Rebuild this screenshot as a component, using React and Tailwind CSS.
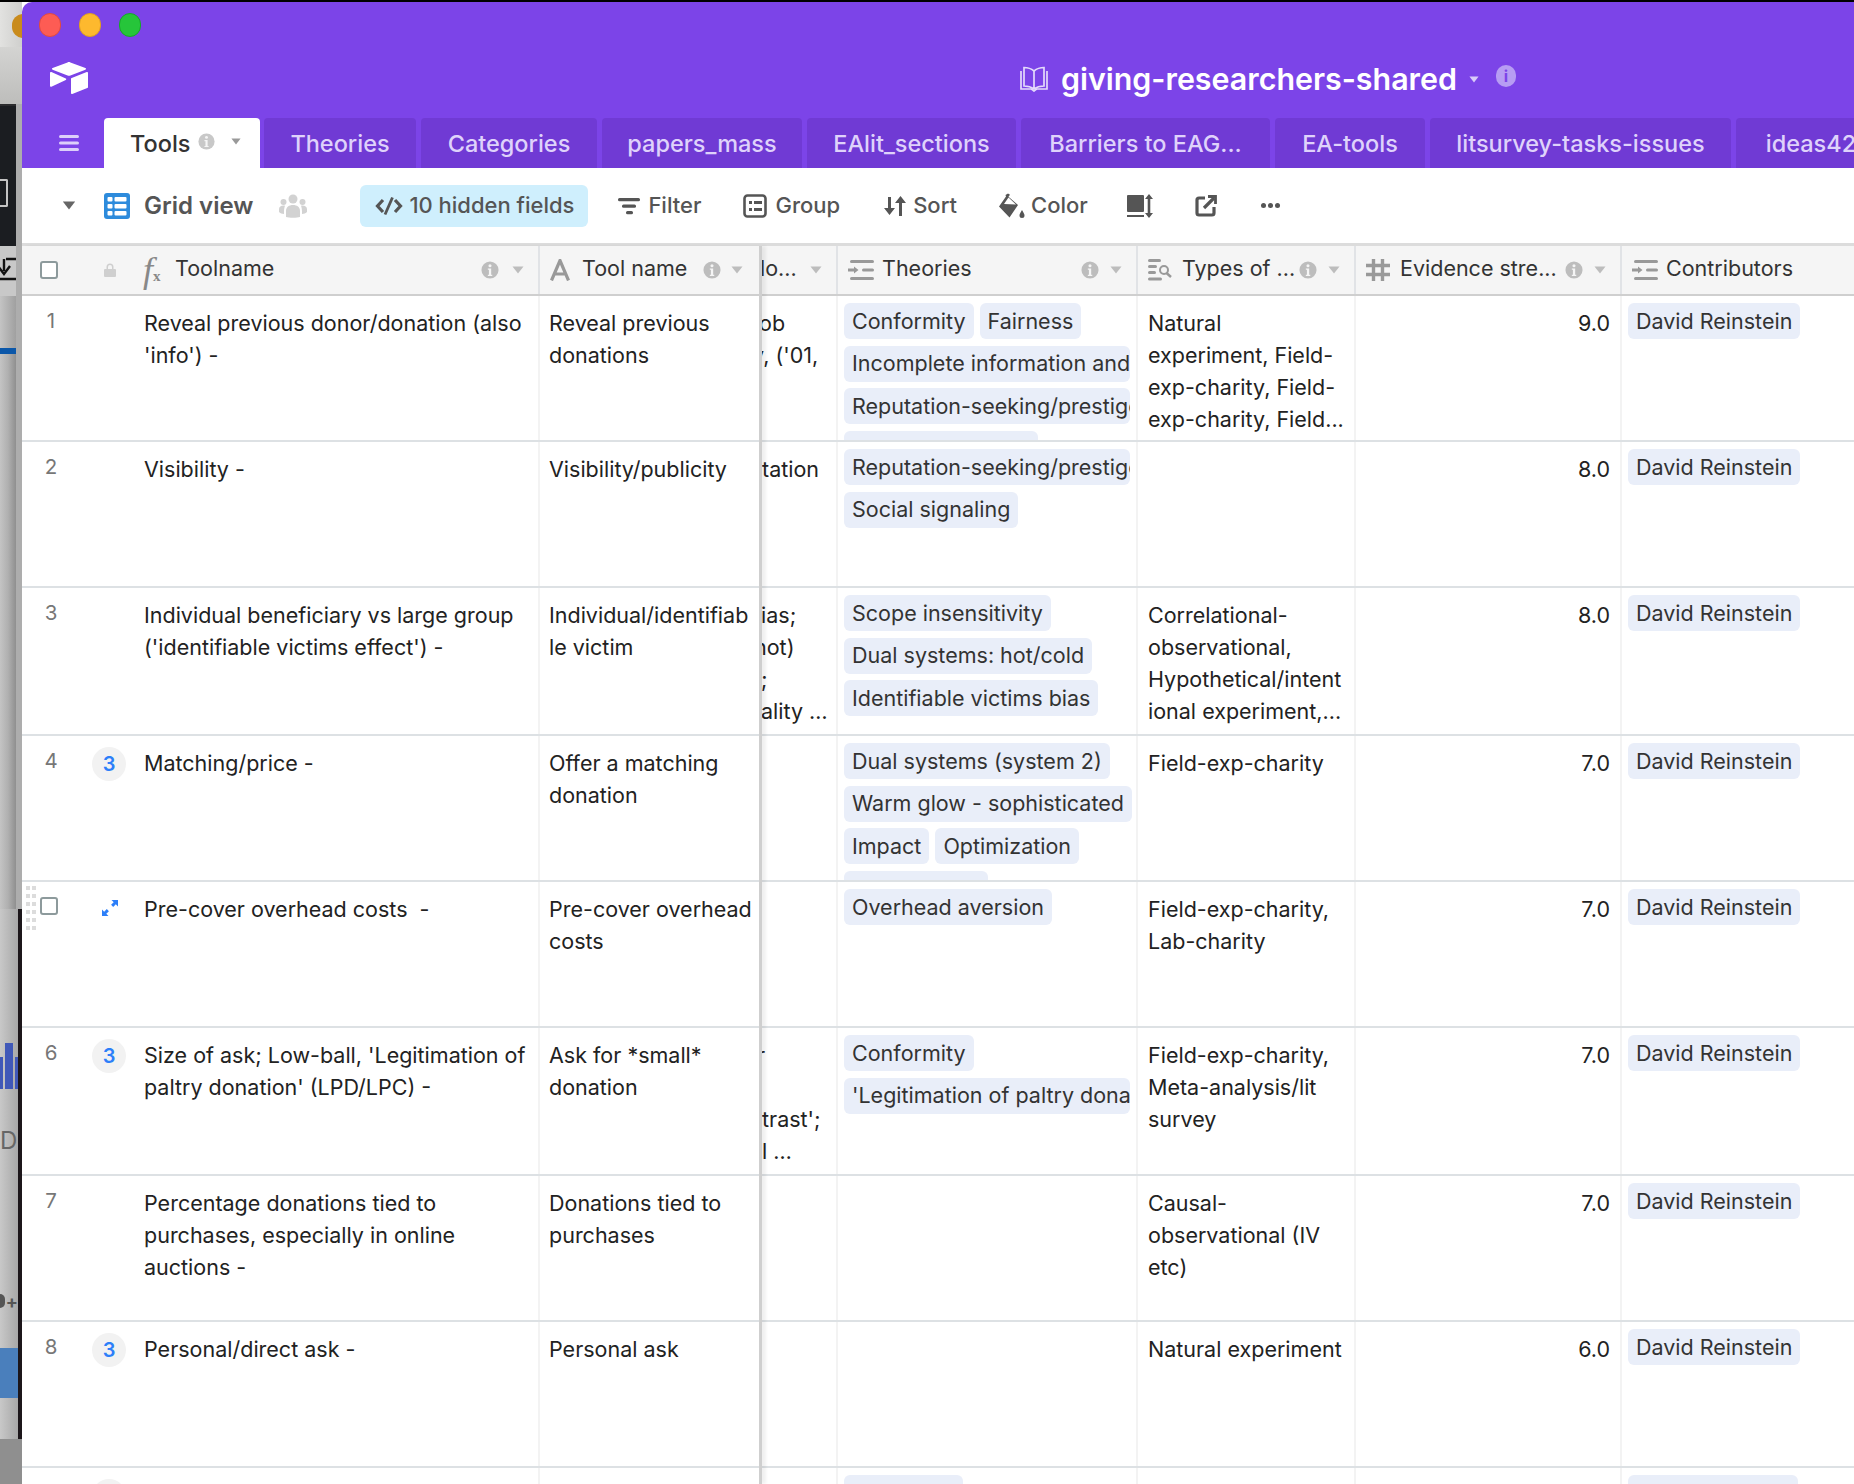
import React from "react";

const Info = ({ className = "" }) => (
  <svg viewBox="0 0 20 20" className={className}>
    <circle cx="10" cy="10" r="9.5" fill="currentColor" />
    <circle cx="10" cy="5.2" r="1.7" fill="#f5f5f5" />
    <path d="M7.6 8.2h3.7v7h1.2v1.4H7.6v-1.4h1.2V9.6H7.6z" fill="#f5f5f5" />
  </svg>
);
const Caret = ({ className = "" }) => (
  <svg viewBox="0 0 12 8" className={className}>
    <path d="M0.5 0.5h11L6 7.5z" fill="currentColor" />
  </svg>
);
const Logo = () => (
  <svg viewBox="0 0 38 32" className="h-[32px] w-[38px]">
    <path d="M17.5 0.4 2.6 6.1c-.8.3-.8 1.3 0 1.6l15 5.8c.9.3 1.9.3 2.8 0l15-5.8c.8-.3.8-1.3 0-1.6L20.4.4c-1-.4-2-.4-2.9 0z" fill="#fff" />
    <path d="M21 16.8V31c0 .7.7 1.1 1.3.9l15-5.8c.4-.1.7-.5.7-.9V11c0-.7-.7-1.1-1.3-.9l-15 5.8c-.4.2-.7.5-.7.9z" fill="#fff" />
    <path d="M0 10.9v12.9c0 .7.8 1.2 1.4.9L15.8 18c.6-.3.6-1.1 0-1.4L1.4 10c-.6-.3-1.4.2-1.4.9z" fill="#fff" />
  </svg>
);
const Book = () => (
  <svg viewBox="0 0 28 26" fill="none" stroke="#e4dafb" strokeWidth="1.7" className="h-[26px] w-[28px]">
    <path d="M14 5C11 2.500 8 1.500 4 1.500V20c4 0 7 .8 10 3 3-2.200 6-3 10-3V1.500C20 1.500 17 2.500 14 5zM14 5v18" />
    <path d="M1 5v18h10.500l2.500 2 2.500-2H27V5" />
  </svg>
);
const Menu = () => (
  <svg viewBox="0 0 20 16" className="h-[16px] w-[20px]" fill="#dccffa">
    <rect y="0" width="20" height="3" rx="1.500" />
    <rect y="6.500" width="20" height="3" rx="1.500" />
    <rect y="13" width="20" height="3" rx="1.500" />
  </svg>
);
const GridIcon = () => (
  <svg viewBox="0 0 26 26" className="h-[26px] w-[26px]">
    <rect width="26" height="26" rx="3" fill="#2d8bdc" />
    <g fill="#fff">
      <rect x="3.500" y="4" width="5" height="4.500" rx="1" />
      <rect x="10.500" y="4" width="12" height="4.500" rx="1" />
      <rect x="3.500" y="11" width="5" height="4.500" rx="1" />
      <rect x="10.500" y="11" width="12" height="4.500" rx="1" />
      <rect x="3.500" y="18" width="5" height="4.500" rx="1" />
      <rect x="10.500" y="18" width="12" height="4.500" rx="1" />
    </g>
  </svg>
);
const People = () => (
  <svg viewBox="0 0 28 24" className="h-[24px] w-[28px]" fill="#d2d2d2">
    <circle cx="14" cy="5" r="4.500" />
    <circle cx="4.500" cy="8" r="3" />
    <circle cx="23.500" cy="8" r="3" />
    <path d="M7 23v-6c0-4 3-6 7-6s7 2 7 6v6c-3 1-11 1-14 0z" />
    <path d="M0 18v-3c0-2 2-3.500 4.500-3.500 1 0 1.500.2 1.500.2C5.500 13 5 15 5 18v2c-2 0-4-.8-5-2zM28 18v-3c0-2-2-3.500-4.500-3.500-1 0-1.500.2-1.500.2.500 1.300 1 3.300 1 6.300v2c2 0 4-.8 5-2z" />
  </svg>
);
const HiddenIcon = () => (
  <svg viewBox="0 0 28 20" fill="none" stroke="#555" strokeWidth="3.200" className="h-[20px] w-[28px]">
    <path d="M8 4 2.500 10 8 16M20 4l5.500 6-5.500 6" />
    <path d="M17.500 1.500 10 18.500" strokeWidth="2.800" />
  </svg>
);
const FilterIcon = () => (
  <svg viewBox="0 0 22 18" className="h-[18px] w-[22px]" fill="#555">
    <rect x="0" y="1" width="22" height="3.200" rx="1.500" />
    <rect x="4" y="7.500" width="14" height="3.200" rx="1.500" />
    <rect x="8" y="14" width="7" height="3.200" rx="1.500" />
  </svg>
);
const GroupIcon = () => (
  <svg viewBox="0 0 24 24" className="h-[24px] w-[24px]" fill="none">
    <rect x="1.500" y="1.500" width="21" height="21" rx="3" stroke="#555" strokeWidth="2.600" />
    <g fill="#555">
      <rect x="6" y="7" width="3" height="3" /><rect x="11" y="7" width="8" height="3" />
      <rect x="6" y="14" width="3" height="3" /><rect x="11" y="14" width="8" height="3" />
    </g>
  </svg>
);
const SortIcon = () => (
  <svg viewBox="0 0 22 22" className="h-[22px] w-[22px]" fill="#555">
    <path d="M4 2h3v11h4l-5.500 7L0 13h4z" />
    <path d="M15 8h-4l5.500-7L22 8h-4v13h-3z" />
  </svg>
);
const ColorIcon = () => (
  <svg viewBox="0 0 26 26" className="h-[26px] w-[26px]" fill="#555">
    <path d="M9 .5l2 1.200-1.500 2L19 12 10.500 24.500 0 13.500 7 3.500 6.500 2z" />
    <path d="M5 11 9.500 4.500 17 11.500z" fill="#fff" />
    <path d="M23 17c1.500 2.500 2.500 4 2.500 5.500a2.500 2.500 0 0 1-5 0c0-1.500 1-3 2.500-5.500z" />
  </svg>
);
const RowHeightIcon = () => (
  <svg viewBox="0 0 26 24" className="h-[24px] w-[26px]" fill="#555">
    <rect x="0" y="1" width="17" height="17" rx="1" />
    <rect x="0" y="21" width="17" height="2" />
    <path d="M22 0l4 5h-2.700v14H26l-4 5-4-5h2.700V5H18z" />
  </svg>
);
const ShareIcon = () => (
  <svg viewBox="0 0 22 22" className="h-[22px] w-[22px]" fill="none" stroke="#555" strokeWidth="3.200">
    <path d="M10 3H4a2 2 0 0 0-2 2v13a2 2 0 0 0 2 2h13a2 2 0 0 0 2-2v-6" />
    <path d="M9 13 19 3" />
    <path d="M13 1.500h7.500V9" strokeWidth="2.800" />
  </svg>
);
const Lines = ({ search }) => (
  <svg viewBox="0 0 26 24" className="h-[24px] w-[26px]" fill="#999">
    {search ? (
      <>
        <rect x="0" y="1" width="13" height="3" rx="1.500" />
        <rect x="0" y="7" width="9" height="3" rx="1.500" />
        <rect x="0" y="13" width="8" height="3" rx="1.500" />
        <rect x="0" y="19.500" width="14" height="3" rx="1.500" />
        <circle cx="16" cy="12" r="4" fill="none" stroke="#999" strokeWidth="2" />
        <path d="M18.500 15l4.500 4" stroke="#999" strokeWidth="2.400" />
      </>
    ) : (
      <>
        <rect x="2" y="2" width="24" height="3" rx="1.500" />
        <rect x="14" y="10.500" width="12" height="3" rx="1.500" />
        <path d="M0 10.500h6V8.500l4.500 3.500L6 15.500v-2H0z" />
        <rect x="2" y="19" width="24" height="3" rx="1.500" />
      </>
    )}
  </svg>
);
const Hash = () => (
  <svg viewBox="0 0 24 24" className="h-[24px] w-[24px]" stroke="#999" strokeWidth="3.400" fill="none">
    <path d="M7.500 1v22M16.500 1v22M0 7.500h24M0 16.500h24" />
  </svg>
);
const AIcon = () => (
  <svg viewBox="0 0 20 22" className="h-[22px] w-[20px]" fill="none" stroke="#999" strokeWidth="3.200">
    <path d="M1.500 21.500 10 1.500l8.500 20M5 15h10" />
  </svg>
);
const Lock = () => (
  <svg viewBox="0 0 12 14" className="h-[14px] w-[12px]" fill="#cfcfcf">
    <rect x="0" y="6" width="12" height="8" rx="1" />
    <path d="M2.500 6.500V4a3.500 3.500 0 0 1 7 0v2.500H8V4a2 2 0 0 0-4 0v2.500z" />
  </svg>
);
const Expand = () => (
  <svg viewBox="0 0 16 16" className="h-[16px] w-[16px]" fill="#2d7ff9">
    <path d="M16 0v6.500l-2.200-2.200-2.600 2.600-2.100-2.100 2.600-2.600L9.500 0z" />
    <path d="M0 16V9.500l2.200 2.200 2.600-2.600 2.100 2.100-2.600 2.600L6.500 16z" />
  </svg>
);
const Check = () => (
  <div className="h-[18px] w-[18px] rounded-[3px] border-2 border-[#8d9a9c] bg-white" />
);
const Tag = ({ children, clip, w }) => (
  <span className={`flex h-[36px] items-center overflow-hidden whitespace-nowrap rounded-[6px] bg-[#e9eef9] pl-[8px] text-[#333] ${clip ? "w-[286px]" : w ? w : "pr-[8px]"}`}>
    {children}
  </span>
);

const tabs = [
  ["Theories", "w-[152px]"],
  ["Categories", "w-[176px]"],
  ["papers_mass", "w-[200px]"],
  ["EAlit_sections", "w-[209px]"],
  ["Barriers to EAG...", "w-[249px]"],
  ["EA-tools", "w-[150px]"],
  ["litsurvey-tasks-issues", "w-[301px]"],
  ["ideas42", "w-[150px]"],
];

const rows = [
  {
    h: "h-[146px]", n: "1",
    a: ["Reveal previous donor/donation (also", "'info') -"],
    b: ["Reveal previous", "donations"],
    c: [["ob", "-ml-[3px]"], ["y, ('01,", "-ml-[10px]"]],
    tags: [[["Conformity"], ["Fairness"]], [["Incomplete information and", 1]], [["Reputation-seeking/prestige", 1]], [["", 0, "w-[194px]"]]],
    t: ["Natural", "experiment, Field-", "exp-charity, Field-", "exp-charity, Field..."],
    e: "9.0",
  },
  {
    h: "h-[146px]", n: "2",
    a: ["Visibility -"],
    b: ["Visibility/publicity"],
    c: [["tation", "ml-[0px]"]],
    tags: [[["Reputation-seeking/prestige", 1]], [["Social signaling"]]],
    t: [], e: "8.0",
  },
  {
    h: "h-[148px]", n: "3",
    a: ["Individual beneficiary vs large group", "('identifiable victims effect') -"],
    b: ["Individual/identifiab", "le victim"],
    c: [["ias;", "-ml-[1px]"], ["hot)", "-ml-[8px]"], [";", "-ml-[1px]"], ["ality \u2026", "-ml-[1px]"]],
    tags: [[["Scope insensitivity"]], [["Dual systems: hot/cold"]], [["Identifiable victims bias"]]],
    t: ["Correlational-", "observational,", "Hypothetical/intent", "ional experiment,..."],
    e: "8.0",
  },
  {
    h: "h-[146px]", n: "4", badge: "3",
    a: ["Matching/price -"],
    b: ["Offer a matching", "donation"],
    c: [],
    tags: [[["Dual systems (system 2)"]], [["Warm glow - sophisticated"]], [["Impact"], ["Optimization"]], [["", 0, "w-[144px]"]]],
    t: ["Field-exp-charity"], e: "7.0",
  },
  {
    h: "h-[146px]", hover: true,
    a: ["Pre-cover overhead costs  -"],
    b: ["Pre-cover overhead", "costs"],
    c: [],
    tags: [[["Overhead aversion"]]],
    t: ["Field-exp-charity,", "Lab-charity"], e: "7.0",
  },
  {
    h: "h-[148px]", n: "6", badge: "3",
    a: ["Size of ask; Low-ball, 'Legitimation of", "paltry donation' (LPD/LPC) -"],
    b: ["Ask for *small*", "donation"],
    c: [["r", "-ml-[5px]"], ["\u00a0", ""], ["trast';", "ml-[0px]"], ["l \u2026", "ml-[0px]"]],
    tags: [[["Conformity"]], [["'Legitimation of paltry donation'", 1]]],
    t: ["Field-exp-charity,", "Meta-analysis/lit", "survey"], e: "7.0",
  },
  {
    h: "h-[146px]", n: "7",
    a: ["Percentage donations tied to", "purchases, especially in online", "auctions -"],
    b: ["Donations tied to", "purchases"],
    c: [], tags: [],
    t: ["Causal-", "observational (IV", "etc)"], e: "7.0",
  },
  {
    h: "h-[146px]", n: "8", badge: "3",
    a: ["Personal/direct ask -"],
    b: ["Personal ask"],
    c: [], tags: [],
    t: ["Natural experiment"], e: "6.0",
  },
  {
    h: "h-[146px]", n: "", badge: "\u00a0",
    a: [], b: [], c: [],
    tags: [[["", 0, "w-[119px]"]]], t: [], e: "", contrib: "w-[170px]",
  },
];

const Text = ({ lines }) => (
  <div className="whitespace-pre leading-[32px] text-[#222]">
    {lines.map((l, i) => <div key={i}>{l}</div>)}
  </div>
);

const HeadCell = ({ icon, label, w, info = true, caret = true, border = true, grow = true }) => (
  <div className={`flex h-full shrink-0 items-center overflow-hidden pl-[10px] ${w} ${border ? "border-r-2 border-[#e1e3e6]" : ""}`}>
    {icon && <span className="flex w-[34px] shrink-0 items-center">{icon}</span>}
    <span className={`whitespace-nowrap pb-[3px] text-[#333] ${grow ? "flex-1" : ""}`}>{label}</span>
    {info && <Info className="ml-auto h-[18px] w-[18px] shrink-0 text-[#bdbdbd]" />}
    {caret && <Caret className="ml-[11px] mr-[14px] h-[8px] w-[12px] shrink-0 text-[#bdbdbd]" />}
  </div>
);

const Strip = () => (
  <div className="flex w-[22px] shrink-0 flex-col overflow-hidden">
    <div className="flex h-[45px] shrink-0 justify-end bg-gradient-to-r from-[#e2e2e0] to-[#cfcfcd] pt-[12px]">
      <div className="h-[24px] w-[22px] translate-x-[12px] rounded-full bg-[#c98b1c]" />
    </div>
    <div className="flex h-[57px] shrink-0 bg-gradient-to-b from-[#d4d4d2] to-[#bdbdbb]" />
    <div className="flex h-[805px] shrink-0 bg-[#adadad]">
      <div className="flex w-[16px] flex-col">
        <div className="flex h-[142px] shrink-0 flex-col justify-center border-t-[2px] border-[#2c2c2e] bg-[#1b1d21]">
          <div className="mt-[34px] h-[28px] w-[8px] rounded-r-[2px] border-2 border-l-0 border-[#c4c4c4]" />
        </div>
        <div className="flex h-[50px] shrink-0 items-center justify-end bg-[#c8c8c8]">
          <svg viewBox="0 0 16 30" className="h-[30px] w-[16px]" fill="none" stroke="#111" strokeWidth="2.400">
            <path d="M6 3h10M4 3v12M-2 10l6 8 6-8M0 23h16" />
          </svg>
        </div>
        <div className="h-[52px] shrink-0 bg-gradient-to-r from-[#c4c4c4] to-[#a0a0a0]" />
        <div className="h-[6px] shrink-0 bg-[#0b57a9]" />
        <div className="flex-1 bg-gradient-to-r from-[#c4c4c4] via-[#b0b0b0] to-[#8f8f8f]" />
      </div>
    </div>
    <div className="flex min-h-0 flex-1 flex-col">
      <div className="flex h-[530px] shrink-0">
        <div className="flex w-[18px] flex-col bg-gradient-to-r from-[#c8c8c8] to-[#a8a8a8]">
          <div className="mt-[134px] flex h-[46px] items-end gap-[2px]">
            <div className="h-[32px] w-[3px] bg-[#4058b8]" />
            <div className="h-[46px] w-[8px] bg-[#4058b8]" />
            <div className="h-[32px] w-[3px] bg-[#4058b8]" />
          </div>
          <div className="mt-[36px] overflow-hidden whitespace-nowrap text-[24px] leading-[32px] text-[#666]">De</div>
          <div className="mt-[134px] flex h-[20px] items-center justify-end gap-[1px] text-[18px] font-bold text-[#555]">
            <span className="h-[14px] w-[6px] rounded-r-full bg-[#555]" />+
          </div>
          <div className="mt-[37px] h-[50px] bg-[#4a7fbc]" />
        </div>
        <div className="w-[4px] bg-[#1c161a]" />
      </div>
      <div className="flex-1 bg-[#8f8f8f]" />
    </div>
  </div>
);

export default function App() {
  return (
    <div className="flex h-[1484px] w-[1854px] flex-col overflow-hidden bg-white [font-family:Inter,'Noto_Sans',sans-serif] text-[21.5px]">
      <div className="h-[2px] shrink-0 bg-black" />
      <div className="flex min-h-0 flex-1">
        <Strip />
        <div className="flex min-w-0 flex-1 flex-col overflow-hidden rounded-tl-[10px]">
          {/* purple app bar */}
          <div className="flex h-[166px] shrink-0 flex-col bg-[#7c44e8]">
            <div className="flex h-[46px] items-start gap-[18px] pl-[17px] pt-[11px]">
              <span className="h-[24px] w-[22px] rounded-full border border-[#e04a40] bg-[#fd5c54]" />
              <span className="h-[24px] w-[22px] rounded-full border border-[#e0a020] bg-[#fdb92e]" />
              <span className="h-[24px] w-[22px] rounded-full border border-[#16a828] bg-[#26c53a]" />
            </div>
            <div className="relative flex h-[70px] items-center pl-[28px]">
              <div className="-mt-[10px]"><Logo /></div>
              <div className="ml-[932px] -mt-[8px] flex items-center">
                <Book />
                <span className="ml-[13px] whitespace-nowrap text-[30.4px] font-semibold leading-[40px] text-white">giving-researchers-shared</span>
                <Caret className="ml-[12px] h-[7px] w-[10px] text-[#d9cbf9]" />
                <span className="ml-[17px] -mt-[6px] flex h-[22px] w-[20px] items-center justify-center rounded-full bg-[#b79df3]">
                  <span className="text-[16px] font-bold leading-none text-[#7c44e8]">i</span>
                </span>
              </div>
            </div>
            <div className="flex h-[50px] items-stretch">
              <div className="flex w-[82px] shrink-0 items-center pl-[37px]"><Menu /></div>
              <div className="flex w-[156px] shrink-0 items-center rounded-t-[4px] bg-white pl-[26px] pt-[2px]">
                <span className="text-[23.5px] font-medium text-[#333]">Tools</span>
                <Info className="ml-[8px] -mt-[6px] h-[17px] w-[17px] shrink-0 text-[#c8c8c8]" />
                <Caret className="ml-[16px] -mt-[6px] h-[7px] w-[10px] shrink-0 text-[#999]" />
              </div>
              <div className="ml-[4px] flex gap-[5px]">
                {tabs.map(([t, w]) => (
                  <div key={t} className={`flex shrink-0 items-center justify-center whitespace-nowrap rounded-t-[4px] bg-[#703ad4] pt-[2px] text-[23.5px] font-medium text-[#dfd2fb] ${w}`}>
                    {t}
                  </div>
                ))}
              </div>
            </div>
          </div>

          {/* toolbar */}
          <div className="flex h-[75px] shrink-0 items-center bg-white pl-[40px] text-[#555]">
            <Caret className="h-[9px] w-[14px] text-[#666]" />
            <div className="ml-[28px]"><GridIcon /></div>
            <span className="ml-[14px] text-[24px] font-semibold">Grid view</span>
            <div className="ml-[26px]"><People /></div>
            <div className="ml-[53px] flex h-[42px] w-[228px] items-center gap-[6px] rounded-[6px] bg-[#cfeffd] pl-[15px] text-[22px] font-medium">
              <HiddenIcon />10 hidden fields
            </div>
            <div className="ml-[30px] flex items-center gap-[8px] text-[22px] font-medium"><FilterIcon />Filter</div>
            <div className="ml-[42px] flex items-center gap-[8px] text-[22px] font-medium"><GroupIcon />Group</div>
            <div className="ml-[44px] flex items-center gap-[7px] text-[22px] font-medium"><SortIcon />Sort</div>
            <div className="ml-[42px] flex items-center gap-[6px] text-[22px] font-medium"><ColorIcon />Color</div>
            <div className="ml-[39px]"><RowHeightIcon /></div>
            <div className="ml-[42px]"><ShareIcon /></div>
            <div className="ml-[44px] flex gap-[2px]">
              <span className="h-[5px] w-[5px] rounded-full bg-[#555]" />
              <span className="h-[5px] w-[5px] rounded-full bg-[#555]" />
              <span className="h-[5px] w-[5px] rounded-full bg-[#555]" />
            </div>
          </div>

          {/* grid */}
          <div className="flex min-h-0 flex-1 border-t-[3px] border-[#dcdcdc]">
            {/* frozen pane */}
            <div className="z-10 flex w-[740px] shrink-0 flex-col border-r-[3px] border-[#cfcfcf] shadow-[4px_0_3px_rgba(0,0,0,0.06)]">
              <div className="flex h-[50px] shrink-0 items-center border-b-2 border-[#cfcfcf] bg-[#f5f5f5]">
                <div className="flex h-full w-[118px] shrink-0 items-center pl-[18px]">
                  <Check />
                  <span className="ml-[46px]"><Lock /></span>
                </div>
                <div className="flex h-full w-[400px] shrink-0 items-center border-r-2 border-[#e1e3e6]">
                  <span className="flex h-full w-[35px] shrink-0 items-center pl-[3px] [font-family:'Liberation_Serif',serif] text-[36px] italic text-[#888]">
                    f<span className="mt-[12px] text-[15px] font-bold not-italic">x</span>
                  </span>
                  <span className="pb-[3px] text-[#333]">Toolname</span>
                  <Info className="ml-auto h-[18px] w-[18px] text-[#bdbdbd]" />
                  <Caret className="ml-[13px] mr-[14px] h-[8px] w-[12px] text-[#bdbdbd]" />
                </div>
                <div className="flex h-full flex-1 items-center pl-[10px]">
                  <AIcon />
                  <span className="ml-[12px] pb-[3px] text-[#333]">Tool name</span>
                  <Info className="ml-auto h-[18px] w-[18px] text-[#bdbdbd]" />
                  <Caret className="ml-[10px] mr-[16px] h-[8px] w-[12px] text-[#bdbdbd]" />
                </div>
              </div>
              {rows.map((r, i) => (
                <div key={i} className={`flex shrink-0 border-b-2 border-[#dde1e4] ${r.h}`}>
                  <div className="flex w-[118px] shrink-0">
                    {r.hover ? (
                      <>
                        <div className="ml-[4px] mt-[4px] grid h-[44px] w-[10px] grid-cols-2 gap-x-[2px] gap-y-[4px]">
                          {Array.from({ length: 12 }).map((_, k) => <span key={k} className="h-[4px] w-[4px] bg-[#dcdcdc]" />)}
                        </div>
                        <div className="ml-[4px] mt-[15px]"><Check /></div>
                        <div className="ml-[44px] mt-[18px]"><Expand /></div>
                      </>
                    ) : (
                      <>
                        <span className="ml-[19px] mt-[9px] w-[20px] text-center text-[20.5px] leading-[32px] text-[#777]">{r.n}</span>
                        {r.badge && (
                          <span className="ml-[31px] mt-[11px] flex h-[34px] w-[34px] items-center justify-center rounded-full bg-[#f2f2f2] text-[20px] font-semibold text-[#2d7ff9]">{r.badge}</span>
                        )}
                      </>
                    )}
                  </div>
                  <div className="w-[400px] shrink-0 border-r-2 border-[#f3f3f3] pl-[4px] pt-[11px]">
                    <Text lines={r.a} />
                  </div>
                  <div className="flex-1 overflow-hidden pl-[9px] pt-[11px]">
                    <Text lines={r.b} />
                  </div>
                </div>
              ))}
            </div>

            {/* scrolling pane */}
            <div className="flex min-w-0 flex-1 flex-col overflow-hidden">
              <div className="flex h-[50px] w-[1120px] shrink-0 items-center border-b-2 border-[#cfcfcf] bg-[#f5f5f5]">
                <div className="flex h-full w-[76px] shrink-0 items-center overflow-hidden border-r-2 border-[#e1e3e6]">
                  <span className="-ml-[2px] whitespace-nowrap pb-[3px] text-[#333]">lo...</span>
                  <Caret className="ml-auto mr-[14px] h-[8px] w-[12px] text-[#bdbdbd]" />
                </div>
                <HeadCell w="w-[300px]" icon={<Lines />} label="Theories" />
                <HeadCell w="w-[218px]" icon={<Lines search />} label="Types of ..." grow={false} />
                <HeadCell w="w-[266px]" icon={<Hash />} label="Evidence stre..." grow={false} />
                <HeadCell w="w-[233px]" icon={<Lines />} label="Contributors" info={false} caret={false} border={false} />
              </div>
              {rows.map((r, i) => (
                <div key={i} className={`flex w-[1120px] shrink-0 overflow-hidden border-b-2 border-[#dde1e4] ${r.h}`}>
                  <div className="w-[76px] shrink-0 overflow-hidden border-r-2 border-[#f3f3f3] pt-[11px] leading-[32px] text-[#222]">
                    {r.c.map(([l, m], k) => <div key={k} className={`whitespace-pre ${m}`}>{l}</div>)}
                  </div>
                  <div className="w-[300px] shrink-0 overflow-hidden border-r-2 border-[#f3f3f3] pl-[6px] pt-[7px]">
                    <div className="flex flex-col gap-[6.500px]">
                      {r.tags.map((line, k) => (
                        <div key={k} className="flex gap-[6px]">
                          {line.map(([t, clip, w], m) => <Tag key={m} clip={clip} w={w}>{t}</Tag>)}
                        </div>
                      ))}
                    </div>
                  </div>
                  <div className="w-[218px] shrink-0 overflow-hidden border-r-2 border-[#f3f3f3] pl-[10px] pt-[11px]">
                    <Text lines={r.t} />
                  </div>
                  <div className="w-[266px] shrink-0 border-r-2 border-[#f3f3f3] pr-[10px] pt-[11px] text-right leading-[32px] text-[#222]">
                    {r.e}
                  </div>
                  <div className="w-[233px] shrink-0 pl-[6px] pt-[7px]">
                    <div className="flex">
                      {r.contrib ? <Tag w={r.contrib} /> : <Tag>David Reinstein</Tag>}
                    </div>
                  </div>
                </div>
              ))}
            </div>
          </div>
        </div>
      </div>
    </div>
  );
}
